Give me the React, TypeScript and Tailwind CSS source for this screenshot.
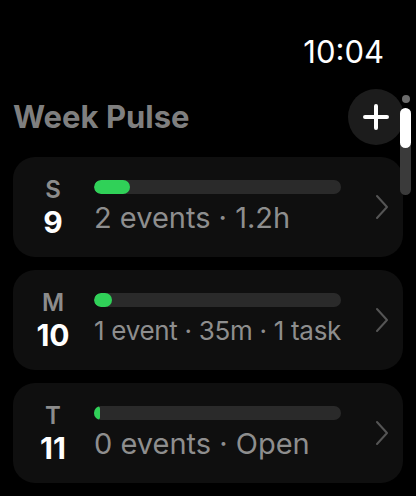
import React from "react";

type Day = {
  letter: string;
  date: number;
  fill: number;
  summary: string;
  small?: boolean;
};

const days: Day[] = [
  { letter: "S", date: 9, fill: 36, summary: "2 events · 1.2h" },
  { letter: "M", date: 10, fill: 18, summary: "1 event · 35m · 1 task", small: true },
  { letter: "T", date: 11, fill: 6, summary: "0 events · Open" },
];

function DayCard({ day }: { day: Day }) {
  return (
    <div className="h-[100px] shrink-0 rounded-[22px] bg-[#0f0f0f] flex items-center pl-3 pr-[13px]">
      <div className="w-[56px] flex flex-col items-center pt-[2px]">
        <span className="text-[24px] leading-[28px] font-semibold text-[#8c8c8c]">{day.letter}</span>
        <span className="text-[30px] leading-[36px] font-bold text-white">{day.date}</span>
      </div>
      <div className="ml-[13px] w-[247px] flex flex-col">
        <div className="h-[14px] rounded-full bg-[#2a2a2a] overflow-hidden">
          <div className="h-full rounded-full bg-[#30d158]" style={{ width: day.fill }} />
        </div>
        {day.small ? (
          <span className="mt-[8px] text-[26px] leading-[32px] text-[#8e8e8e] whitespace-nowrap tracking-[-0.3px]">
            {day.summary}
          </span>
        ) : (
          <span className="mt-[7px] text-[29px] leading-[34px] text-[#8e8e8e] whitespace-nowrap">
            {day.summary}
          </span>
        )}
      </div>
      <svg className="ml-auto" width="16" height="26" viewBox="0 0 16 26" fill="none">
        <path d="M3 2 L13 13 L3 24" stroke="#555555" strokeWidth="2" strokeLinecap="round" strokeLinejoin="round" />
      </svg>
    </div>
  );
}

export default function App() {
  return (
    <main
      className="relative w-[416px] h-[496px] overflow-hidden bg-black flex flex-col"
      style={{ fontFamily: "Inter, 'Noto Sans', sans-serif" }}
    >
      <div className="h-[76px] shrink-0 flex items-end justify-end pr-[32px] pb-[6px]">
        <span className="text-[31px] leading-[36px] text-white">10:04</span>
      </div>
      <div className="h-[81px] shrink-0 flex items-center justify-between pl-[13px] pr-[12px]">
        <h1 className="text-[31px] leading-[36px] font-bold text-[#7f7f7f]">Week Pulse</h1>
        <button className="w-[56px] h-[56px] rounded-full bg-[#1c1c1c] flex items-center justify-center">
          <svg width="26" height="26" viewBox="0 0 26 26">
            <path d="M13 2 V24 M2 13 H24" stroke="white" strokeWidth="4" strokeLinecap="round" />
          </svg>
        </button>
      </div>
      <div className="flex flex-col gap-[13px] px-[13px]">
        {days.map((day) => (
          <DayCard key={day.letter} day={day} />
        ))}
      </div>

      <div className="absolute left-[402px] top-[95px] w-[8px] h-[8px] rounded-full bg-[#6b6b6b]" />
      <div className="absolute left-[400px] top-[108px] w-[11px] h-[87px] rounded-full bg-[#3a3a3a]">
        <div className="h-[40px] rounded-full bg-white" />
      </div>
    </main>
  );
}
